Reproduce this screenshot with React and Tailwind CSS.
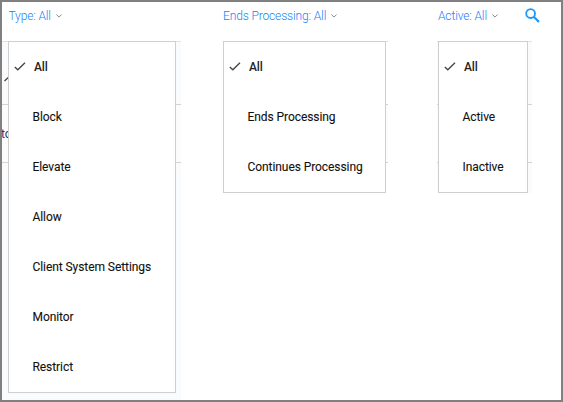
import React from 'react';

const typeOptions = ['Block', 'Elevate', 'Allow', 'Client System Settings', 'Monitor', 'Restrict'];

function Filter({ label }) {
  return (
    <button className="flex h-[28px] items-center whitespace-nowrap text-[12px] font-light tracking-[-0.14px] text-[#1a7ff5]">
      <span>{label}</span>
      <svg className="ml-[5px] h-[4px] w-[6px]" viewBox="0 0 6 4" fill="none" stroke="#8a8a8a" strokeWidth="1">
        <path d="M.4.5 3 3.1 5.6.5" />
      </svg>
    </button>
  );
}

function Menu({ options, className }) {
  return (
    <ul className={`col-start-1 row-start-1 border border-[#cfcfcf] bg-white text-[12px] text-[#111] ${className}`}>
      <li className="flex h-[50px] items-center pl-[5px]">
        <svg className="-mt-[2px] h-[9px] w-[12px]" viewBox="0 0 12 9" fill="none" stroke="#444" strokeWidth="1.3">
          <path d="M.8 5 3.8 7.8 11 .8" />
        </svg>
        <span className="ml-[8px] font-medium tracking-[-0.15px] text-[#222]">All</span>
      </li>
      {options.map((option) => (
        <li key={option} className="flex h-[50px] items-center whitespace-nowrap pl-[23.5px] tracking-[-0.07px] [-webkit-text-stroke:0.1px_#111]">
          {option}
        </li>
      ))}
    </ul>
  );
}

function Rows({ tint, children }) {
  return (
    <div className="col-start-1 row-start-1 flex flex-col">
      <div className={`flex h-[63px] items-center border-t border-[#e2e2e2] ${tint}`}>{children?.[0]}</div>
      <div className="flex h-[59px] items-center border-y border-[#d3d3d3] bg-[#fcfcfd]">{children?.[1]}</div>
      <div className={`flex-1 ${tint}`} />
    </div>
  );
}

export default function App() {
  return (
    <div className="flex h-[402px] w-[563px] items-start overflow-hidden border-2 border-[#808080] bg-white font-['Roboto','Liberation_Sans',sans-serif]">
      <section className="w-[179px]">
        <div className="h-[39px] pl-[6.5px]">
          <Filter label="Type: All" />
        </div>
        <div className="grid h-[359px] items-start overflow-hidden [&>div]:h-full">
          <Rows tint="bg-[#fafbfd]">
            {[
              <svg key="sort" className="mt-[12px] ml-[2px] h-[6px] w-[10px]" viewBox="0 0 10 6" fill="none" stroke="#444" strokeWidth="1.3">
                <path d="M.5 5 5 .8 9.5 5" />
              </svg>,
              <span key="cell" className="-ml-px text-[12px] text-[#27336b]">tor</span>,
            ]}
          </Rows>
          <Menu options={typeOptions} className="ml-[6px] w-[168px]" />
        </div>
      </section>

      <section className="ml-[42px] w-[165px]">
        <div className="h-[39px]">
          <Filter label="Ends Processing: All" />
        </div>
        <div className="grid h-[152px] items-start [&>div]:h-full">
          <Rows tint="bg-white" />
          <Menu options={['Ends Processing', 'Continues Processing']} className="w-[163px]" />
        </div>
      </section>

      <section className="ml-[49px] w-[95px]">
        <div className="h-[39px] pl-px">
          <Filter label="Active: All" />
        </div>
        <div className="grid h-[152px] items-start [&>div]:h-full">
          <Rows tint="bg-[#fafbfd]" />
          <Menu options={['Active', 'Inactive']} className="ml-px w-[90px]" />
        </div>
      </section>

      <svg className="mt-[6px] -ml-[7px] h-[15px] w-[15px] shrink-0" viewBox="0 0 15 15" fill="none" stroke="#2196f3">
        <circle cx="5.6" cy="5.6" r="4.4" strokeWidth="1.8" />
        <path d="M8.8 8.8 14 14" strokeWidth="2.2" />
      </svg>
    </div>
  );
}
